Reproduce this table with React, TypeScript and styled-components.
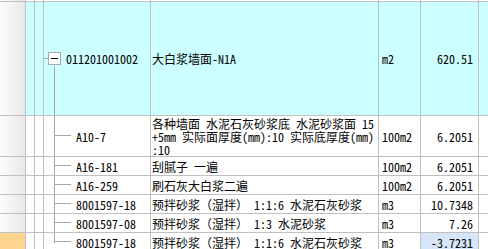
import React from "react";
import styled, { createGlobalStyle } from "styled-components";

const LINE = "#c0c0c0";
const TREE = "#a8a8a8";

const Global = createGlobalStyle`
  html, body { margin: 0; padding: 0; background: #fff; overflow: hidden; }
  body {
    font-family: "Noto Sans Mono CJK SC", "Noto Sans CJK SC", "Liberation Mono", monospace;
    font-size: 12px;
    color: #000;
  }
`;

const Sheet = styled.div`
  width: 488px;
  height: 249px;
  overflow: hidden;
  display: flex;
  flex-direction: column;
`;

const Row = styled.div<{ $h: number; $bg?: string; $top?: boolean }>`
  display: grid;
  grid-template-columns: 26px 9px 9px 107px 228px 42px 58px 1fr;
  flex: none;
  box-sizing: border-box;
  height: ${(p) => p.$h}px;
  border-top: ${(p) => (p.$top === false ? "none" : `1px solid ${LINE}`)};
  background: ${(p) => p.$bg ?? "#fff"};
`;

const Cell = styled.div<{ $align?: "start" | "end"; $pl?: number; $pr?: number; $bg?: string }>`
  box-sizing: border-box;
  border-right: 1px solid ${LINE};
  display: flex;
  align-items: center;
  justify-content: ${(p) => (p.$align === "end" ? "flex-end" : "flex-start")};
  padding-left: ${(p) => p.$pl ?? 0}px;
  padding-right: ${(p) => p.$pr ?? 0}px;
  background: ${(p) => p.$bg ?? "transparent"};
  white-space: pre;
  line-height: 13px;
  overflow: hidden;
  min-width: 0;
`;

const LastCell = styled.div``;

const RowHead = styled(Cell)<{ $current?: boolean }>`
  background: ${(p) =>
    p.$current ? "#ffd48e" : "linear-gradient(to right, #fbfbfb, #e9e9e9)"};
`;

const TreeCell = styled(Cell)`
  position: relative;
`;

/* vertical trunk of the tree: full height, or top half only for the last child */
const Trunk = styled.span<{ $from: "top" | "mid"; $to: "mid" | "bottom" }>`
  position: absolute;
  left: 10px;
  width: 1px;
  background: ${TREE};
  top: ${(p) => (p.$from === "top" ? "0" : "calc(50% + 7px)")};
  bottom: ${(p) => (p.$to === "bottom" ? "0" : "calc(50% - 1px)")};
`;

const Branch = styled.span<{ $left: number; $width: number }>`
  position: absolute;
  left: ${(p) => p.$left}px;
  width: ${(p) => p.$width}px;
  top: calc(50% - 1px);
  height: 1px;
  background: ${TREE};
`;

const Toggle = styled.span`
  position: absolute;
  left: 4px;
  top: calc(50% - 7px);
  width: 13px;
  height: 13px;
  box-sizing: border-box;
  border: 1px solid ${TREE};
  background: #fff;
  display: flex;
  align-items: center;
  justify-content: center;
  &::after {
    content: "";
    width: 7px;
    height: 1px;
    background: #000;
  }
`;

type Item = {
  code: string;
  desc: string;
  unit: string;
  qty: string;
  h: number;
  last?: boolean;
  current?: boolean;
};

const items: Item[] = [
  {
    code: "A10-7",
    desc: "各种墙面 水泥石灰砂浆底 水泥砂浆面 15\n+5mm 实际面厚度(mm):10 实际底厚度(mm)\n:10",
    unit: "100m2",
    qty: "6.2051",
    h: 41,
  },
  { code: "A16-181", desc: "刮腻子 一遍", unit: "100m2", qty: "6.2051", h: 19 },
  { code: "A16-259", desc: "刷石灰大白浆二遍", unit: "100m2", qty: "6.2051", h: 19 },
  { code: "8001597-18", desc: "预拌砂浆（湿拌） 1:1:6 水泥石灰砂浆", unit: "m3", qty: "10.7348", h: 19 },
  { code: "8001597-08", desc: "预拌砂浆（湿拌） 1:3 水泥砂浆", unit: "m3", qty: "7.26", h: 19 },
  {
    code: "8001597-18",
    desc: "预拌砂浆（湿拌） 1:1:6 水泥石灰砂浆",
    unit: "m3",
    qty: "-3.7231",
    h: 19,
    last: true,
    current: true,
  },
];

const Gutter = () => (
  <>
    <Cell />
    <Cell />
  </>
);

export default function App() {
  return (
    <Sheet>
      <Global />
      <Row $h={1} $top={false}>
        <RowHead />
        <Gutter />
        <Cell />
        <Cell />
        <Cell />
        <Cell />
        <LastCell />
      </Row>

      <Row $h={114} $bg="#ccffff">
        <RowHead />
        <Gutter />
        <TreeCell $pl={22}>
          <Branch $left={0} $width={4} style={{ top: "calc(50% - 1px)" }} />
          <Toggle />
          <Trunk $from="mid" $to="bottom" />
          011201001002
        </TreeCell>
        <Cell $pl={1}>大白浆墙面-N1A</Cell>
        <Cell $pl={3}>m2</Cell>
        <Cell $align="end" $pr={5}>620.51</Cell>
        <LastCell />
      </Row>

      {items.map((it, i) => (
        <Row key={i} $h={it.h}>
          <RowHead $current={it.current} />
          <Gutter />
          <TreeCell $pl={32}>
            <Trunk $from="top" $to={it.last ? "mid" : "bottom"} />
            <Branch $left={10} $width={17} />
            {it.code}
          </TreeCell>
          <Cell $pl={1}>{it.desc}</Cell>
          <Cell $pl={3}>{it.unit}</Cell>
          <Cell $align="end" $pr={5} $bg={it.current ? "#d4e6f8" : undefined}>
            {it.qty}
          </Cell>
          <LastCell />
        </Row>
      ))}
    </Sheet>
  );
}
